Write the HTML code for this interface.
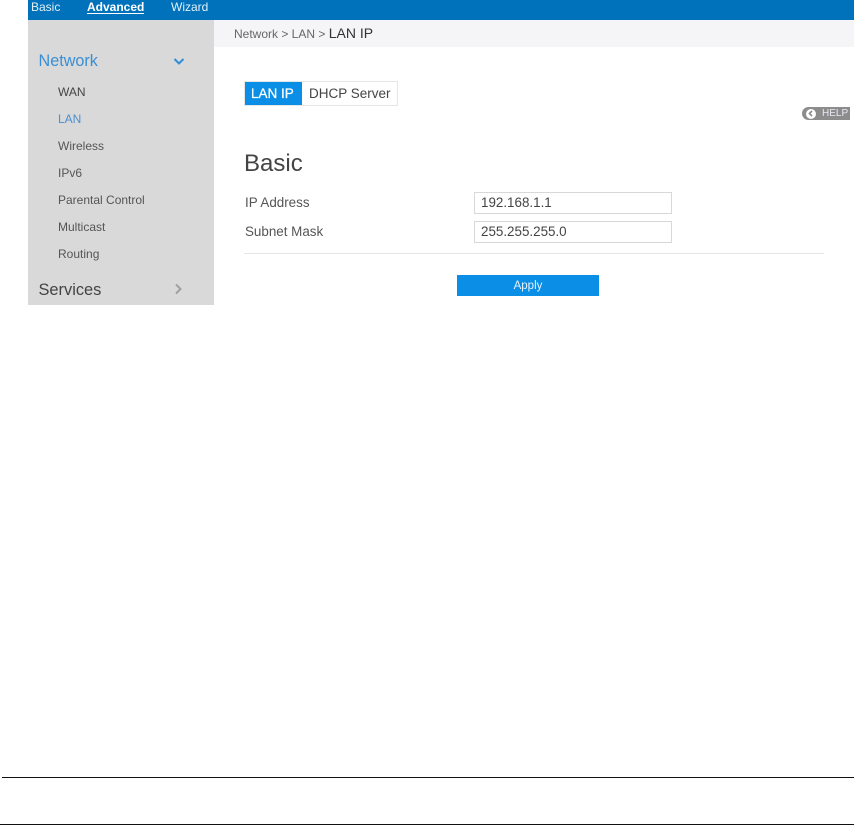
<!DOCTYPE html>
<html>
<head>
<meta charset="utf-8">
<style>
html,body{margin:0;padding:0;background:#fff;}
body{width:854px;height:825px;position:relative;overflow:hidden;font-family:"Liberation Sans",sans-serif;}
.a{position:absolute;white-space:nowrap;line-height:1;}
.b{position:absolute;}
</style>
</head>
<body>
<div class="b" style="left:28px;top:0;width:826px;height:20px;background:#0072bc"></div>
<div class="a" style="left:31px;top:1px;font-size:12px;color:#e4f0f8">Basic</div>
<div class="a" style="left:87px;top:1px;font-size:12px;font-weight:bold;color:#fff;border-bottom:1px solid #fff;padding-bottom:0">Advanced</div>
<div class="a" style="left:171px;top:1px;font-size:12px;color:#e4f0f8">Wizard</div>

<div class="b" style="left:28px;top:20px;width:186px;height:285px;background:#d9d9d9"></div>
<div class="b" style="left:214px;top:20px;width:640px;height:27px;background:#f5f5f7"></div>
<div class="a" style="left:234px;top:26px;font-size:12px;color:#666">Network &gt; LAN &gt; <span style="font-size:14px;color:#333">LAN IP</span></div>

<div class="a" style="left:38.5px;top:53px;font-size:16.2px;color:#3a8fd4">Network</div>
<svg class="b" style="left:172px;top:56px" width="14" height="10" viewBox="0 0 14 10"><path d="M2.5 3L7 7.5L11.5 3" fill="none" stroke="#2f8fd6" stroke-width="2"/></svg>
<div class="a" style="left:58px;top:86px;font-size:12px;color:#444">WAN</div>
<div class="a" style="left:58px;top:113px;font-size:12px;color:#4a90d0">LAN</div>
<div class="a" style="left:58px;top:140px;font-size:12px;color:#555">Wireless</div>
<div class="a" style="left:58px;top:167px;font-size:12px;color:#555">IPv6</div>
<div class="a" style="left:58px;top:194px;font-size:12px;color:#555">Parental Control</div>
<div class="a" style="left:58px;top:221px;font-size:12px;color:#555">Multicast</div>
<div class="a" style="left:58px;top:248px;font-size:12px;color:#555">Routing</div>
<div class="a" style="left:38.5px;top:282px;font-size:16.4px;color:#444">Services</div>
<svg class="b" style="left:173px;top:282px" width="12" height="14" viewBox="0 0 12 14"><path d="M3 2.5L7.5 7L3 11.5" fill="none" stroke="#a0a0a0" stroke-width="2"/></svg>

<div class="b" style="left:244px;top:81px;width:154px;height:25px;box-sizing:border-box;border:1px solid #e6e6e6;background:#fff"></div>
<div class="b" style="left:245px;top:82px;width:57px;height:23px;background:#0a8ee6"></div>
<div class="a" style="left:251px;top:87px;font-size:13.5px;color:#fff;-webkit-text-stroke:.25px #fff">LAN IP</div>
<div class="a" style="left:309px;top:87px;font-size:13.5px;color:#444">DHCP Server</div>

<div class="b" style="left:802px;top:107px;width:48px;height:13px;background:#8c8c8c;border-radius:7px 0 0 7px"></div>
<div class="b" style="left:806px;top:108.5px;width:10px;height:10px;background:#fff;border-radius:50%"></div>
<svg class="b" style="left:806px;top:108px" width="10" height="11" viewBox="0 0 10 11"><path d="M6 3L3.5 5.5L6 8" fill="none" stroke="#8c8c8c" stroke-width="1.6"/></svg>
<div class="a" style="left:822px;top:109px;font-size:10px;color:#e8e8f0">HELP</div>

<div class="a" style="left:244px;top:152px;font-size:24px;color:#444">Basic</div>
<div class="a" style="left:245px;top:196px;font-size:13.4px;color:#555">IP Address</div>
<div class="a" style="left:245px;top:225px;font-size:13.4px;color:#555">Subnet Mask</div>
<div class="b" style="left:474px;top:192px;width:198px;height:22px;box-sizing:border-box;border:1px solid #d8d8d8"></div>
<div class="b" style="left:474px;top:221px;width:198px;height:22px;box-sizing:border-box;border:1px solid #d8d8d8"></div>
<div class="a" style="left:481px;top:196px;font-size:13.4px;color:#444">192.168.1.1</div>
<div class="a" style="left:481px;top:225px;font-size:13.4px;color:#444">255.255.255.0</div>
<div class="b" style="left:244px;top:253px;width:580px;height:1px;background:#e6e6e6"></div>
<div class="b" style="left:457px;top:275px;width:142px;height:21px;background:#0a8ee6"></div>
<div class="a" style="left:457px;top:281px;width:142px;text-align:center;font-size:11.5px;color:#e8f4fd">Apply</div>

<div class="b" style="left:2px;top:777px;width:852px;height:1px;background:#111"></div>
<div class="b" style="left:0;top:824px;width:854px;height:1px;background:#111"></div>
</body>
</html>
